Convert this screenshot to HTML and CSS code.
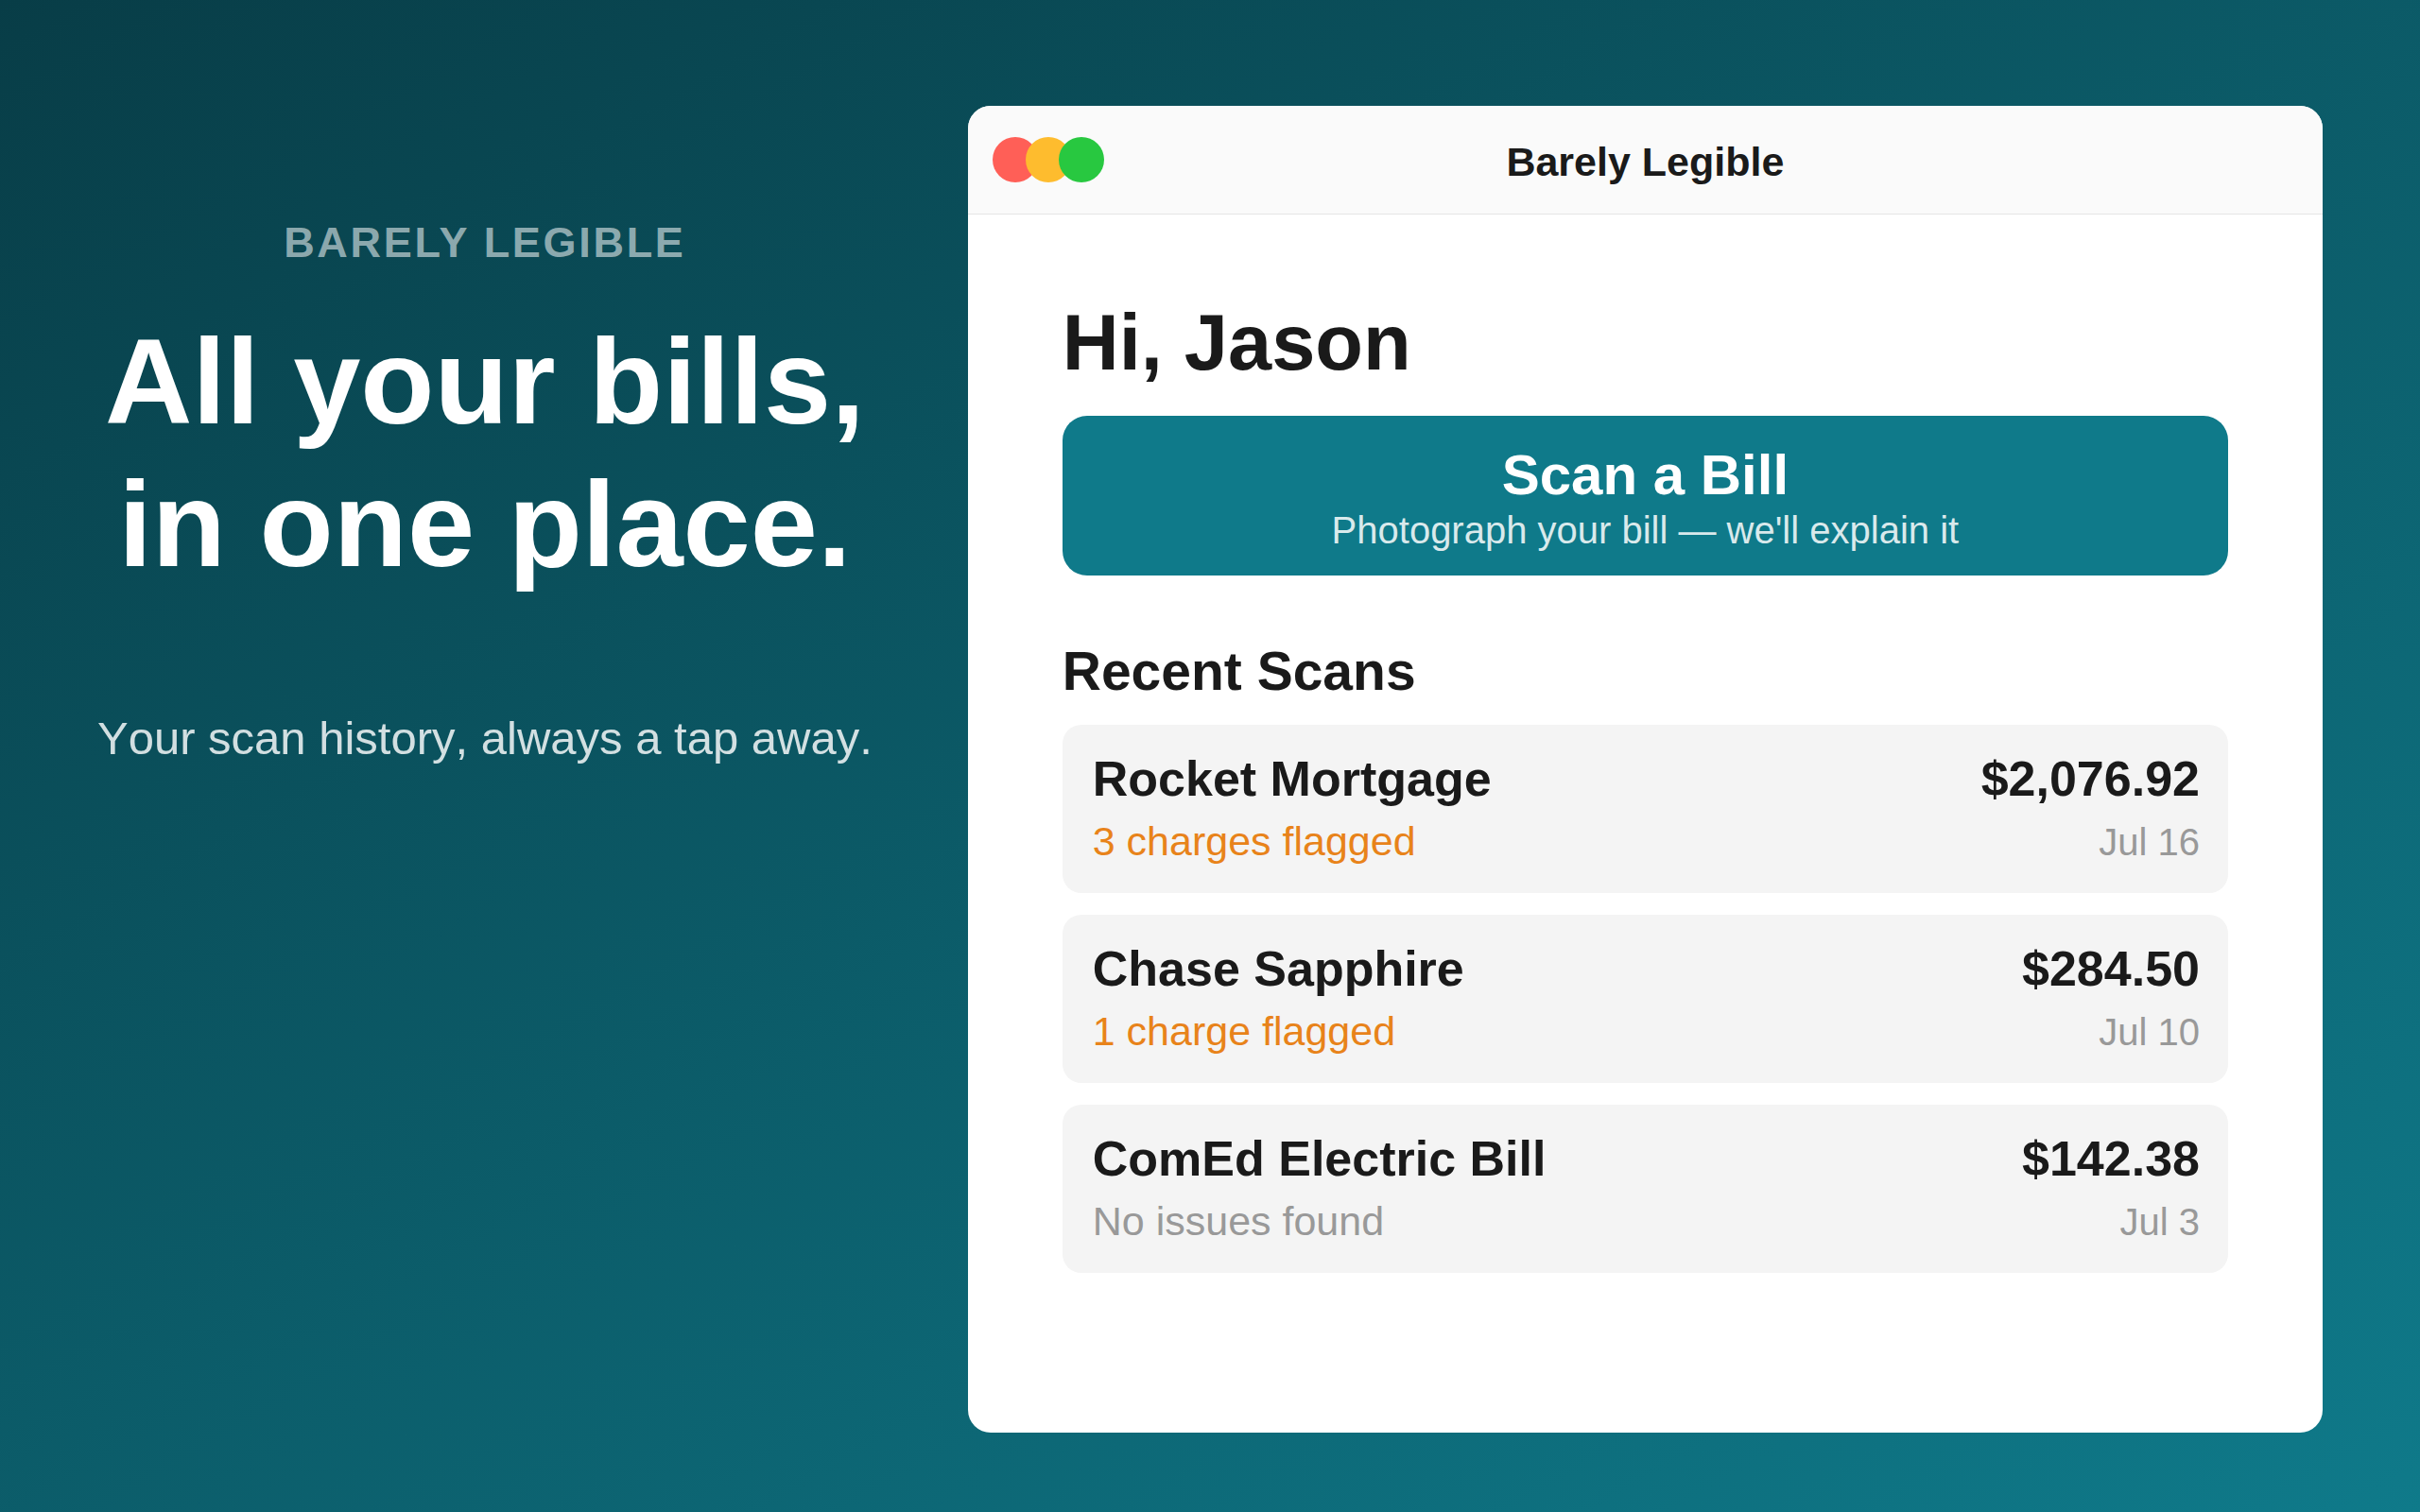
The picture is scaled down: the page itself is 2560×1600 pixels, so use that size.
FILE: index.html
```html
<!DOCTYPE html>
<html lang="en">

<head>
  <meta charset="utf-8">
  <meta name="viewport" content="width=device-width, initial-scale=1">
  <title>Barely Legible</title>
  <link rel="stylesheet" href="styles.css">
</head>

<body>
  <header id="intro">
    <p id="brand">BARELY LEGIBLE</p>
    <h1 id="headline">All your bills,<br>in one place.</h1>
    <p id="tagline">Your scan history, always a tap away.</p>
  </header>

  <main id="window">
    <div id="titlebar">
      <div id="lights">
        <span class="light close"></span>
        <span class="light minimize"></span>
        <span class="light zoom"></span>
      </div>
      <p id="window_title">Barely Legible</p>
    </div>

    <div id="content">
      <h2 id="greeting">Hi, Jason</h2>
      <button id="scan" type="button">
        <span class="scan_title">Scan a Bill</span>
        <span class="scan_hint">Photograph your bill — we'll explain it</span>
      </button>

      <h3 id="recent">Recent Scans</h3>
      <ul id="scans">
        <li class="bill">
          <span class="name">Rocket Mortgage</span>
          <span class="amount">$2,076.92</span>
          <span class="status flagged">3 charges flagged</span>
          <span class="date">Jul 16</span>
        </li>
        <li class="bill">
          <span class="name">Chase Sapphire</span>
          <span class="amount">$284.50</span>
          <span class="status flagged">1 charge flagged</span>
          <span class="date">Jul 10</span>
        </li>
        <li class="bill">
          <span class="name">ComEd Electric Bill</span>
          <span class="amount">$142.38</span>
          <span class="status">No issues found</span>
          <span class="date">Jul 3</span>
        </li>
      </ul>
    </div>
  </main>
</body>

</html>
```
FILE: styles.css
```css
*,
*:before,
*:after {
  box-sizing: border-box
}

* {
  margin: 0;
  padding: 0
}

:root {
  --teal: #0f7a8a;
  --ink: #1a1a1a;
  --muted: #999
}

body {
  min-height: 100vh;
  padding: 112px 103px 84px 0;
  display: grid;
  grid-template-columns: 40fr 56fr;
  font-family: 'Liberation Sans', Arial, sans-serif;
  color: var(--ink);
  background: linear-gradient(150deg, #083d47, var(--teal))
}

/* left side */

#intro {
  padding: 119px 0 0 2px;
  text-align: center;
  color: #fff
}

#brand {
  font-size: 45px;
  font-weight: bold;
  line-height: 52px;
  letter-spacing: 0.06em;
  color: rgb(255 255 255 / 55%)
}

#headline {
  margin-top: 45px;
  font-size: 128px;
  line-height: 151px
}

#tagline {
  margin-top: 123px;
  font-size: 49px;
  line-height: 56px;
  font-kerning: none;
  color: rgb(255 255 255 / 82%)
}

/* app window */

#window {
  border-radius: 24px;
  background: #fff;
  overflow: hidden
}

#titlebar {
  display: grid;
  grid-template-columns: 1fr auto 1fr;
  align-items: center;
  height: 115px;
  padding: 0 26px;
  border-bottom: 1px solid #e5e5e5;
  background: #fafafa
}

#lights {
  display: flex
}

.light {
  width: 48px;
  height: 48px;
  border-radius: 50%
}

.light + .light {
  margin-left: -13px
}

.close {
  background: #ff5f57
}

.minimize {
  background: #febc2e
}

.zoom {
  background: #28c840
}

#window_title {
  padding-top: 4px;
  font-size: 43px;
  font-weight: bold;
  line-height: 48px
}

#content {
  padding: 87px 100px
}

#greeting {
  font-size: 83px;
  line-height: 98px
}

#scan {
  display: block;
  width: 100%;
  margin-top: 28px;
  padding: 28px 32px 24px;
  border: none;
  border-radius: 26px;
  font: inherit;
  color: #fff;
  background: var(--teal);
  cursor: pointer
}

#scan span {
  display: block
}

.scan_title {
  font-size: 60px;
  font-weight: bold;
  line-height: 69px
}

.scan_hint {
  font-size: 40px;
  line-height: 48px;
  color: rgb(255 255 255 / 85%)
}

#recent {
  margin-top: 68px;
  font-size: 57px;
  line-height: 66px
}

#scans {
  display: grid;
  gap: 23px;
  margin-top: 24px;
  list-style: none
}

.bill {
  display: grid;
  grid-template-columns: 1fr auto;
  align-items: baseline;
  row-gap: 11px;
  padding: 27px 30px 30px 32px;
  border-radius: 20px;
  background: #f4f4f4
}

.name,
.amount {
  font-size: 52px;
  font-weight: bold;
  line-height: 60px
}

.amount {
  text-align: right
}

.status {
  font-size: 43px;
  line-height: 50px;
  color: var(--muted)
}

.flagged {
  color: #e8831a
}

.date {
  font-size: 40px;
  line-height: 46px;
  text-align: right;
  color: var(--muted)
}
```
